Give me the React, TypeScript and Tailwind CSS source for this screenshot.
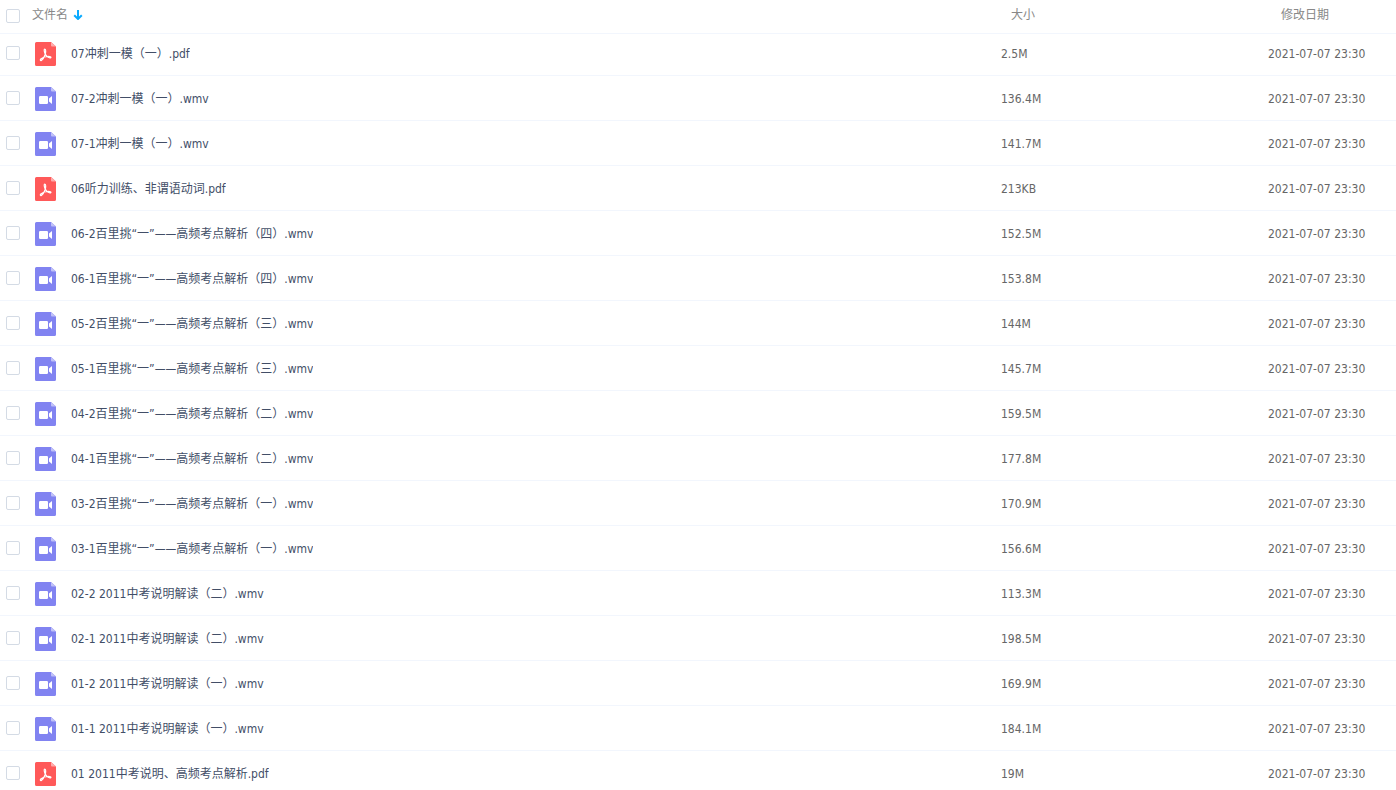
import { useState } from "react";

type FileItem = {
  name: string;
  size: string;
  date: string;
};

const MODIFIED = "2021-07-07 23:30";

const FILES: FileItem[] = [
  { name: "07冲刺一模（一）.pdf", size: "2.5M", date: MODIFIED },
  { name: "07-2冲刺一模（一）.wmv", size: "136.4M", date: MODIFIED },
  { name: "07-1冲刺一模（一）.wmv", size: "141.7M", date: MODIFIED },
  { name: "06听力训练、非谓语动词.pdf", size: "213KB", date: MODIFIED },
  { name: "06-2百里挑“一”——高频考点解析（四）.wmv", size: "152.5M", date: MODIFIED },
  { name: "06-1百里挑“一”——高频考点解析（四）.wmv", size: "153.8M", date: MODIFIED },
  { name: "05-2百里挑“一”——高频考点解析（三）.wmv", size: "144M", date: MODIFIED },
  { name: "05-1百里挑“一”——高频考点解析（三）.wmv", size: "145.7M", date: MODIFIED },
  { name: "04-2百里挑“一”——高频考点解析（二）.wmv", size: "159.5M", date: MODIFIED },
  { name: "04-1百里挑“一”——高频考点解析（二）.wmv", size: "177.8M", date: MODIFIED },
  { name: "03-2百里挑“一”——高频考点解析（一）.wmv", size: "170.9M", date: MODIFIED },
  { name: "03-1百里挑“一”——高频考点解析（一）.wmv", size: "156.6M", date: MODIFIED },
  { name: "02-2 2011中考说明解读（二）.wmv", size: "113.3M", date: MODIFIED },
  { name: "02-1 2011中考说明解读（二）.wmv", size: "198.5M", date: MODIFIED },
  { name: "01-2 2011中考说明解读（一）.wmv", size: "169.9M", date: MODIFIED },
  { name: "01-1 2011中考说明解读（一）.wmv", size: "184.1M", date: MODIFIED },
  { name: "01 2011中考说明、高频考点解析.pdf", size: "19M", date: MODIFIED },
];

const PdfIcon = () => (
  <svg viewBox="0 0 21 24" className="h-6 w-[21px] shrink-0" aria-hidden="true">
    <path d="M1.500 0H16l5 4.500v18a1.500 1.500 0 0 1-1.500 1.500h-18A1.500 1.500 0 0 1 0 22.500v-21A1.500 1.500 0 0 1 1.500 0z" fill="#ff5959" />
    <path d="M16 0l5 4.500h-4a1 1 0 0 1-1-1z" fill="#ffacac" />
    <path
      d="M9.800 7c1.300 0 1 3.500.3 5.600-.8 2.300-2.200 4.900-3.700 5.800-1 .4-1.500-.5-.6-1.400 1.700-1.500 5.600-2.700 9-2.500 1.600.3 1.500 1.500.2 1.300-2.200-.5-4.400-2.600-5.300-5.100-.5-1.600-.8-3.700.1-3.700z"
      fill="none"
      stroke="#fff"
      strokeWidth="1.200"
      strokeLinejoin="round"
    />
  </svg>
);

const VideoIcon = () => (
  <svg viewBox="0 0 21 24" className="h-6 w-[21px] shrink-0" aria-hidden="true">
    <path d="M1.500 0H16l5 4.500v18a1.500 1.500 0 0 1-1.500 1.500h-18A1.500 1.500 0 0 1 0 22.500v-21A1.500 1.500 0 0 1 1.500 0z" fill="#8183f1" />
    <path d="M16 0l5 4.500h-4a1 1 0 0 1-1-1z" fill="#c0c1f8" />
    <rect x="4" y="9" width="9" height="8" rx="1.200" fill="#fff" />
    <path d="M17 9v8l-3-2.500v-3z" fill="#fff" />
  </svg>
);

const SortArrow = () => (
  <svg viewBox="0 0 10 10" className="h-[10px] w-[10px]" aria-hidden="true">
    <path d="M5 0v8.500M1.200 5.200L5 9l3.800-3.800" fill="none" stroke="#09aaff" strokeWidth="2" />
  </svg>
);

type CheckProps = {
  label: string;
  checked: boolean;
  onChange: () => void;
};

const Check = ({ label, checked, onChange }: CheckProps) => (
  <input
    type="checkbox"
    aria-label={label}
    checked={checked}
    onChange={onChange}
    className="block h-[14px] w-[14px] shrink-0 appearance-none rounded-xs border border-[#d4dbe5] bg-white checked:border-[#09aaff] checked:bg-[#09aaff]"
  />
);

export default function App() {
  const [selected, setSelected] = useState<string[]>([]);
  const allSelected = selected.length === FILES.length;

  const toggle = (name: string) =>
    setSelected((prev) =>
      prev.includes(name) ? prev.filter((n) => n !== name) : [...prev, name]
    );

  return (
    <main className="h-screen overflow-hidden bg-white font-['DejaVu_Sans_Condensed','DejaVu_Sans','Noto_Sans_CJK_SC',sans-serif] text-xs">
      <table className="w-full table-fixed border-separate border-spacing-0 text-left">
        <colgroup>
          <col />
          <col className="w-[267px]" />
          <col className="w-[128px]" />
        </colgroup>
        <thead>
          <tr className="text-[#888]">
            <th className="h-[34px] border-b border-[#f2f6fd] p-0 pb-1 pl-1.5 font-normal">
              <div className="flex items-center">
                <div className="pt-0.5">
                  <Check
                    label="全选"
                    checked={allSelected}
                    onChange={() => setSelected(allSelected ? [] : FILES.map((f) => f.name))}
                  />
                </div>
                <button type="button" className="ml-3 flex items-center gap-[5px]">
                  文件名
                  <SortArrow />
                </button>
              </div>
            </th>
            <th className="border-b border-[#f2f6fd] p-0 pb-1 pl-[10px] font-normal">大小</th>
            <th className="border-b border-[#f2f6fd] p-0 pb-1 pl-[13px] font-normal">修改日期</th>
          </tr>
        </thead>
        <tbody>
          {FILES.map((file) => (
            <tr
              key={file.name}
              className="text-[#666] *:h-[45px] *:border-b *:border-[#f2f6fd] *:p-0 first:*:h-[42px] first:*:pb-[3px] hover:bg-[#f8fbff]"
            >
              <td>
                <div className="flex items-center pl-1.5">
                  <Check
                    label={file.name}
                    checked={selected.includes(file.name)}
                    onChange={() => toggle(file.name)}
                  />
                  <div className="mr-[15px] ml-[15px] pt-0.5">
                    {file.name.endsWith(".pdf") ? <PdfIcon /> : <VideoIcon />}
                  </div>
                  <a href="#" className="truncate pt-0.5 text-[#424e67]">
                    {file.name}
                  </a>
                </div>
              </td>
              <td>
                <div className="pt-0.5">{file.size}</div>
              </td>
              <td>
                <div className="pt-0.5">{file.date}</div>
              </td>
            </tr>
          ))}
        </tbody>
      </table>
    </main>
  );
}
